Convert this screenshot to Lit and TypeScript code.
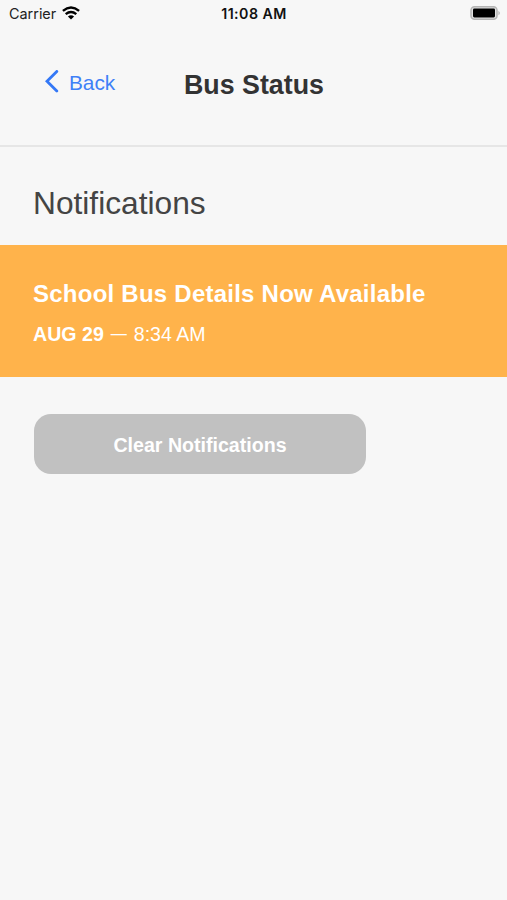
import { LitElement, html, css } from "lit";
import { customElement } from "lit/decorators.js";

@customElement("app-root")
export class AppRoot extends LitElement {
  static styles = css`
    :host { display: block; height: 900px; background: #f7f7f7; font-family: "Liberation Sans", Arial, sans-serif; overflow: hidden; }
    .status { height: 26px; display: grid; grid-template-columns: 1fr auto 1fr; align-items: center; padding: 0 6px 0 9px; font: 14.4px Inter, sans-serif; color: #222; box-sizing: border-box; }
    .carrier { display: flex; align-items: center; gap: 6px; }
    .time { font-weight: 600; font-size: 14.2px; letter-spacing: 0.45px; color: #111; margin-right: 2px; }
    .battery { justify-self: end; display: block; }
    .wifi { display: block; }
    .nav { height: 121px; box-sizing: border-box; border-bottom: 2px solid #e6e6e6; display: grid; grid-template-columns: 184px 1fr; align-items: start; }
    .back { display: flex; align-items: center; gap: 9px; padding: 42px 0 0 45px; color: #3f80f7; font-size: 20.8px; line-height: 26px; }
    .back span { padding-top: 2px; }
    .title { margin: 0; padding-top: 43px; font-size: 26.8px; line-height: 32px; font-weight: 700; color: #333; white-space: nowrap; }
    .heading { margin: 0; height: 98px; box-sizing: border-box; padding: 37px 33px 0; font-size: 31.7px; line-height: 38px; font-weight: 400; color: #444; white-space: nowrap; }
    .card { height: 132px; box-sizing: border-box; padding: 34px 33px 0; background: #ffb34b; color: #fff; white-space: nowrap; }
    .name { font-size: 24px; line-height: 30px; font-weight: 700; letter-spacing: 0.24px; }
    .date { margin-top: 12px; display: flex; align-items: center; font-size: 19.6px; line-height: 26px; }
    .dash { font-size: 16px; margin: 0 7px 0 7px; }
    .clear { display: block; margin: 37px 0 0 34px; width: 332px; height: 60px; padding: 2px 0 0; border: 0; border-radius: 17px; background: #c1c1c1; color: #fff; font: 700 19.6px "Liberation Sans", Arial, sans-serif; }
  `;
  render() {
    return html`
      <div class="status">
        <div class="carrier"><span>Carrier</span>
          <svg class="wifi" width="18" height="14" viewBox="0 0 18 14" fill="none" stroke="#000" stroke-width="2.4"><path d="M.9 4.9Q9-1.7 17.1 4.9M3.7 8.1Q9 3.9 14.3 8.1"/><path d="M9 13.5 5.9 10.5Q9 7.9 12.1 10.5Z" fill="#000" stroke="none"/></svg>
        </div>
        <span class="time">11:08 AM</span>
        <svg class="battery" width="31" height="14" viewBox="0 0 31 14"><rect x="1" y=".75" width="26" height="12.5" rx="3.5" fill="#e2e2e2" stroke="#b4b4b4" stroke-width="1.5"/><rect x="3" y="2.6" width="22" height="8.8" rx="1.3" fill="#000"/><path d="M28.5 4.7Q31 7 28.5 9.3Z" fill="#aaa"/></svg>
      </div>
      <div class="nav">
        <div class="back"><svg width="15" height="24" viewBox="0 0 15 24" fill="none" stroke="#3478f6" stroke-width="2.8" stroke-linecap="round"><path d="M11.8 1.4 2 11.2 11.8 21"/></svg><span>Back</span></div>
        <h1 class="title">Bus Status</h1>
      </div>
      <h2 class="heading">Notifications</h2>
      <div class="card">
        <div class="name">School Bus Details Now Available</div>
        <div class="date"><b>AUG 29</b><span class="dash">—</span><span>8:34 AM</span></div>
      </div>
      <button class="clear">Clear Notifications</button>
    `;
  }
}
